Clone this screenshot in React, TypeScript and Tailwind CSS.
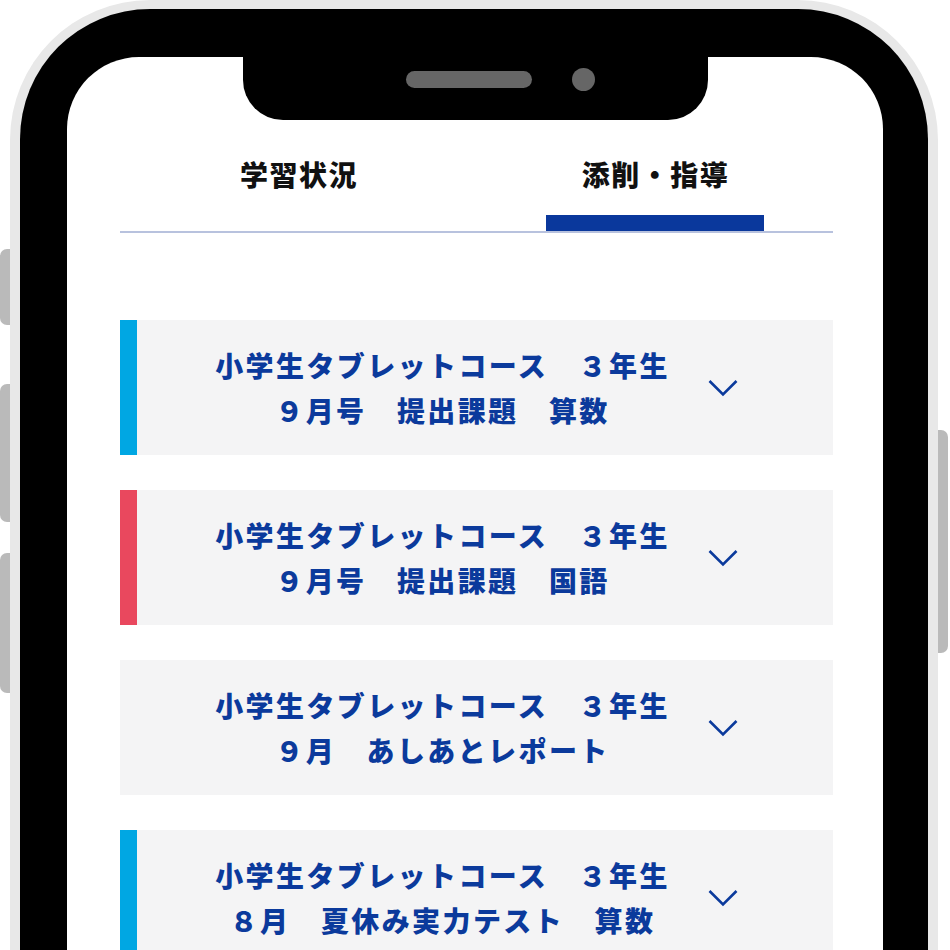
import React from "react";

type Item = {
  line1: string;
  line2: string;
  accent?: string;
};

const items: Item[] = [
  { line1: "小学生タブレットコース　３年生", line2: "９月号　提出課題　算数", accent: "bg-[#00a7e3]" },
  { line1: "小学生タブレットコース　３年生", line2: "９月号　提出課題　国語", accent: "bg-[#e9485e]" },
  { line1: "小学生タブレットコース　３年生", line2: "９月　あしあとレポート" },
  { line1: "小学生タブレットコース　３年生", line2: "８月　夏休み実力テスト　算数", accent: "bg-[#00a7e3]" },
];

function Chevron() {
  return (
    <svg width="30" height="18" viewBox="0 0 30 18" fill="none" className="shrink-0">
      <path d="M1.5 2 L15 15.5 L28.5 2" stroke="#0b3a9c" strokeWidth="2.6" />
    </svg>
  );
}

function Tab({ label, active }: { label: string; active?: boolean }) {
  return (
    <div className="flex flex-1 flex-col items-center">
      <div className="h-[40px] pl-[1.5px] text-[28px] font-black leading-[40px] tracking-[1.5px] text-[#111]">{label}</div>
      <div className={`mt-[21px] h-[16px] w-[218px] ${active ? "bg-[#0a389c]" : "bg-transparent"}`} />
    </div>
  );
}

function Card({ item }: { item: Item }) {
  return (
    <div className="relative flex h-[135px] items-center justify-center gap-[38px] bg-[#f4f4f5]">
      {item.accent && <div className={`absolute inset-y-0 left-0 w-[17px] ${item.accent}`} />}
      <div className="text-center text-[28px] font-black leading-[45px] tracking-[2.4px] text-[#0b3a9c]">
        <div>{item.line1}</div>
        <div>{item.line2}</div>
      </div>
      <Chevron />
    </div>
  );
}

export default function App() {
  return (
    <div className="relative h-[950px] w-[950px] overflow-hidden bg-white font-[family-name:'Noto_Sans_CJK_JP',sans-serif]">
      {/* side buttons */}
      <div className="absolute left-0 top-[249px] h-[76px] w-[10px] rounded-l-[7px] bg-[#bababa]" />
      <div className="absolute left-0 top-[384px] h-[138px] w-[10px] rounded-l-[7px] bg-[#bababa]" />
      <div className="absolute left-0 top-[553px] h-[140px] w-[10px] rounded-l-[7px] bg-[#bababa]" />
      <div className="absolute left-[938px] top-[430px] h-[223px] w-[10px] rounded-r-[7px] bg-[#bababa]" />

      <div className="ml-[10px] h-[1100px] w-[928px] rounded-t-[140px] bg-[#e8e8e8] px-[10px] pt-[9px]">
        <div className="h-full rounded-t-[130px] bg-black pl-[47px] pr-[45px] pt-[48px]">
          <div className="relative h-full rounded-t-[72px] bg-white pl-[53px] pr-[50px] pt-[97px]">
            {/* notch */}
            <div className="absolute left-[176px] top-0 flex h-[63px] w-[465px] items-start rounded-b-[40px] bg-black pl-[163px]">
              <div className="mt-[14px] h-[17px] w-[126px] rounded-full bg-[#666]" />
              <div className="ml-[40px] mt-[11px] h-[23px] w-[23px] rounded-full bg-[#666]" />
            </div>

            <div className="flex border-b-2 border-[#b8c2de]">
              <Tab label="学習状況" />
              <Tab label="添削・指導" active />
            </div>

            <div className="mt-[87px] flex flex-col gap-[35px]">
              {items.map((item, i) => (
                <Card key={i} item={item} />
              ))}
            </div>
          </div>
        </div>
      </div>
    </div>
  );
}
